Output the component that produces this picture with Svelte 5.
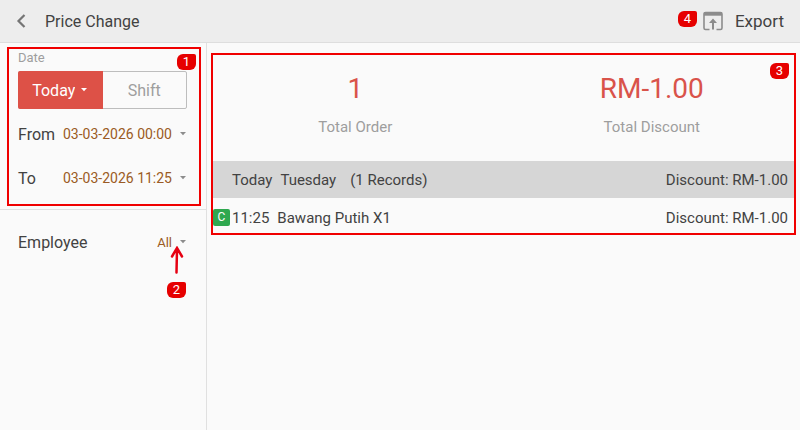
<script>
  let mode = $state("today");
  let period = $state("Today");
  let employee = $state("All");

  const range = [
    { id: "from", label: "From", value: "03-03-2026 00:00" },
    { id: "to", label: "To", value: "03-03-2026 11:25" }
  ];

  const totals = [
    { value: "1", label: "Total Order" },
    { value: "RM-1.00", label: "Total Discount" }
  ];

  const records = [
    { time: "11:25", name: "Bawang Putih X1", discount: "RM-1.00" }
  ];
</script>

{#snippet caret()}
  <svg class="caret" viewBox="0 0 8 4" aria-hidden="true">
    <path d="M1 0h6L4 3.2z" fill="currentColor" />
  </svg>
{/snippet}

<div class="page">
  <header>
    <button class="back" aria-label="Back">
      <svg viewBox="0 0 10 14" aria-hidden="true">
        <path d="M8.500 1L2.500 7l6 6" fill="none" stroke="#757575" stroke-width="2.200" />
      </svg>
    </button>
    <h1>Price Change</h1>
    <button class="export">
      <span class="mark">4</span>
      <svg viewBox="0 0 20 20" aria-hidden="true">
        <path d="M6.500 18.500H2.500A1.500 1.500 0 0 1 1 17V3a1.500 1.500 0 0 1 1.500-1.500h15A1.500 1.500 0 0 1 19 3v14a1.500 1.500 0 0 1-1.500 1.500h-4" fill="none" stroke="#8c8c8c" stroke-width="1.600" />
        <path d="M1 1.500h18v3.200H1z" fill="#8c8c8c" />
        <path d="M10 7.500l4 4.500h-3v6.500H9V12H6z" fill="#8c8c8c" />
      </svg>
      Export
    </button>
  </header>

  <div class="content">
    <aside>
      <section class="date">
        <span class="mark corner">1</span>
        <h2>Date</h2>
        <div class="switch">
          <label class="period" class:active={mode === "today"}>
            <select bind:value={period} aria-label="Period" onclick={() => (mode = "today")}>
              <option>Today</option>
              <option>Yesterday</option>
            </select>
            {@render caret()}
          </label>
          <button class:active={mode === "shift"} onclick={() => (mode = "shift")}>Shift</button>
        </div>
        <div class="range">
          {#each range as item (item.id)}
            <div class="row">
              <label for={item.id}>{item.label}</label>
              <button id={item.id} class="picker" aria-haspopup="dialog">
                {item.value}
                {@render caret()}
              </button>
            </div>
          {/each}
        </div>
      </section>

      <section class="employee">
        <div class="row">
          <label for="employee">Employee</label>
          <div class="picker small">
            <select id="employee" bind:value={employee}>
              <option>All</option>
            </select>
            {@render caret()}
          </div>
        </div>
        <div class="pointer">
          <svg viewBox="0 0 14 28" aria-hidden="true">
            <path d="M6.500 26.500L7 3M2 10.500L7 2l5 8.500" fill="none" stroke="#e60012" stroke-width="2.500" stroke-linecap="round" />
          </svg>
          <span class="mark">2</span>
        </div>
      </section>
    </aside>

    <main>
      <section class="report">
        <span class="mark corner">3</span>
        <div class="totals">
          {#each totals as total (total.label)}
            <div class="total">
              <strong>{total.value}</strong>
              <span>{total.label}</span>
            </div>
          {/each}
        </div>
        <div class="line day">
          <span>Today</span>
          <span>Tuesday</span>
          <span class="count">({records.length} Records)</span>
          <span class="discount">Discount: RM-1.00</span>
        </div>
        {#each records as record (record.time)}
          <div class="line record">
            <span class="tag">C</span>
            <span>{record.time}</span>
            <span>{record.name}</span>
            <span class="discount">Discount: {record.discount}</span>
          </div>
        {/each}
      </section>
    </main>
  </div>
</div>

<style>
  :global(body) {
    background: #fafafa;
  }
  .page {
    min-height: 100vh;
    display: flex;
    flex-direction: column;
    font-family: Roboto, "Liberation Sans", sans-serif;
    font-size: 16px;
    color: #424242;
  }
  button,
  select {
    margin: 0;
    padding: 0;
    border: 0;
    background: none;
    font: inherit;
    color: inherit;
    appearance: none;
    cursor: pointer;
  }
  select {
    field-sizing: content;
  }
  h1,
  h2 {
    margin: 0;
    font-weight: 400;
  }
  header {
    height: 42px;
    display: flex;
    align-items: center;
    padding: 0 16px;
    background: #ededed;
    border-bottom: 1px solid #dedede;
  }
  h1 {
    font-size: 16px;
  }
  .back {
    width: 29px;
    height: 24px;
    display: flex;
    align-items: center;
  }
  .back svg {
    width: 10px;
    height: 14px;
  }
  .export {
    margin-left: auto;
    display: flex;
    align-items: center;
    font-size: 17px;
  }
  .export .mark {
    margin-bottom: 4px;
  }
  .export svg {
    width: 20px;
    height: 20px;
    margin: 0 12px 0 6px;
  }
  .content {
    flex: 1;
    display: flex;
  }
  aside {
    width: 206px;
    border-right: 1px solid #e0e0e0;
  }
  .caret {
    width: 8px;
    height: 4px;
    flex: none;
  }
  .date,
  .report {
    position: relative;
    border: 2px solid #f00000;
  }
  .date {
    margin: 4px 5px 3px 7px;
    padding: 1px 12px 4px 9px;
  }
  h2 {
    font-size: 13px;
    line-height: 16px;
    color: #9e9e9e;
  }
  .switch {
    height: 36px;
    margin-top: 5px;
    display: grid;
    grid-template-columns: 1fr 1fr;
    border: 1px solid #bdbdbd;
    border-radius: 2px;
    color: #9e9e9e;
  }
  .period {
    display: flex;
    align-items: center;
    justify-content: center;
    gap: 5px;
    margin: -1px 0 -1px -1px;
    border-radius: 2px 0 0 2px;
  }
  .active {
    background: #dd5147;
    color: #fff;
  }
  .row {
    height: 44px;
    display: flex;
    align-items: center;
    justify-content: space-between;
  }
  .range {
    margin-top: 3px;
  }
  .picker {
    display: flex;
    align-items: center;
    gap: 7px;
    font-size: 14px;
    color: #9a5b24;
  }
  .picker .caret {
    color: #8c8c8c;
  }
  .small {
    font-size: 13px;
  }
  .employee {
    padding: 10px 19px 0 18px;
    border-top: 1px solid #e0e0e0;
  }
  .pointer {
    margin-top: -18px;
    padding-right: 1px;
    display: flex;
    flex-direction: column;
    align-items: flex-end;
    gap: 8px;
  }
  .pointer svg {
    width: 14px;
    height: 28px;
    margin-right: 2px;
  }
  .mark {
    width: 19px;
    height: 16px;
    border-radius: 6px 2px 6px 6px;
    background: #e60000;
    color: #fff;
    font-size: 13px;
    line-height: 16px;
    text-align: center;
  }
  .corner {
    position: absolute;
    top: 5px;
    right: 3px;
  }
  main {
    flex: 1;
    min-width: 0;
  }
  .report {
    margin: 10px 4px 0;
  }
  .report .corner {
    top: 8px;
    right: 5px;
  }
  .totals {
    display: grid;
    grid-template-columns: 1fr 1fr;
    margin: 0 -6px;
    padding: 16px 0 22px;
    text-align: center;
  }
  .total {
    display: flex;
    flex-direction: column;
    gap: 8px;
  }
  .total strong {
    font-size: 28px;
    line-height: 36px;
    font-weight: 400;
    color: #d9534a;
  }
  .total span {
    font-size: 15px;
    line-height: 24px;
    color: #9e9e9e;
  }
  .line {
    display: flex;
    align-items: center;
    gap: 8px;
    padding: 0 6px 0 19px;
    font-size: 15px;
  }
  .day {
    height: 37px;
    background: #d6d6d6;
  }
  .record {
    height: 31px;
    padding-top: 4px;
  }
  .count {
    margin-left: 6px;
  }
  .discount {
    margin-left: auto;
  }
  .tag {
    width: 17px;
    height: 17px;
    margin: 0 -6px 0 -19px;
    border-radius: 2px;
    background: #2fa84f;
    color: #fff;
    font-size: 12px;
    line-height: 17px;
    text-align: center;
  }
</style>
